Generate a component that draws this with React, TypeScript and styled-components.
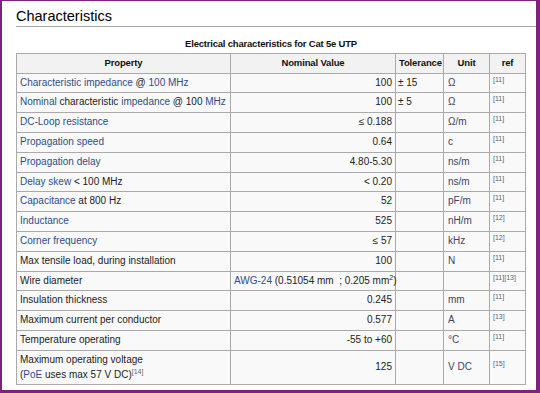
import React, { FC } from "react";
import styled, { createGlobalStyle } from "styled-components";

const GlobalStyle = createGlobalStyle`
  html, body {
    margin: 0;
    padding: 0;
    background: #ffffff;
  }
  body {
    font-family: "Liberation Sans", Arial, sans-serif;
  }
`;

const Frame = styled.div`
  box-sizing: border-box;
  width: 540px;
  height: 393px;
  border-style: solid;
  border-color: #7d237d;
  border-width: 1px 4px 3px 2px;
  padding: 0 0 0 14px;
  overflow: hidden;
  background: #ffffff;
`;

const Heading = styled.h2`
  margin: 0;
  padding: 6px 0 0 0;
  height: 19px;
  font-family: "Liberation Sans", Arial, sans-serif;
  font-size: 14.5px;
  font-weight: normal;
  line-height: 19px;
  color: #000000;
  border-bottom: 1px solid #aaaaaa;
`;

const Table = styled.table`
  margin-top: 10px;
  width: 509px;
  border-collapse: collapse;
  table-layout: fixed;
  background: #f9f9f9;
  border: 1px solid #aaaaaa;
  font-size: 10px;
  color: #222222;
`;

const Caption = styled.caption`
  font-weight: bold;
  font-size: 9.5px;
  letter-spacing: -0.2px;
  line-height: 13px;
  padding-bottom: 3px;
  color: #111111;
  background: #ffffff;
`;

const HeadCell = styled.th<{ $width: number }>`
  box-sizing: border-box;
  width: ${(p) => p.$width}px;
  background: #f2f2f2;
  border: 1px solid #aaaaaa;
  padding: 2px 3px;
  line-height: 14.6px;
  font-size: 9.5px;
  letter-spacing: -0.15px;
  font-weight: bold;
  text-align: center;
  color: #111111;
  white-space: nowrap;
`;

const Cell = styled.td<{ $align?: "left" | "right"; $tight?: boolean }>`
  border: 1px solid #aaaaaa;
  padding: ${(p) => (p.$tight ? "2px 2px" : "2px 3px")};
  line-height: 14.8px;
  text-align: ${(p) => p.$align || "left"};
  vertical-align: middle;
  white-space: nowrap;
  overflow: visible;

  sup {
    font-size: 7px;
    line-height: 0;
  }
`;

const UnitCell = styled(Cell)`
  padding-left: 4px;
  color: #3b4566;
`;

const RefCell = styled.td`
  border: 1px solid #aaaaaa;
  padding: 2px 3px;
  line-height: 14.8px;
  vertical-align: middle;
  white-space: nowrap;
`;

const Link = styled.span`
  color: #2d4d8c;
`;

const Ref = styled.sup`
  font-size: 7px;
  line-height: 0;
  color: #5a5f80;
  vertical-align: super;
`;

type Row = {
  property: React.ReactNode;
  value: React.ReactNode;
  valueLeft?: boolean;
  tolerance?: string;
  unit?: string;
  refs: string[];
};

const rows: Row[] = [
  {
    property: (
      <>
        <Link>Characteristic</Link> <Link>impedance</Link> @ <Link>100 MHz</Link>
      </>
    ),
    value: "100",
    tolerance: "± 15",
    unit: "Ω",
    refs: ["11"],
  },
  {
    property: (
      <>
        <Link>Nominal</Link> characteristic <Link>impedance</Link> @ 100{" "}
        <Link>MHz</Link>
      </>
    ),
    value: "100",
    tolerance: "± 5",
    unit: "Ω",
    refs: ["11"],
  },
  {
    property: <Link>DC-Loop resistance</Link>,
    value: "≤ 0.188",
    unit: "Ω/m",
    refs: ["11"],
  },
  { property: <Link>Propagation speed</Link>, value: "0.64", unit: "c", refs: ["11"] },
  { property: <Link>Propagation delay</Link>, value: "4.80-5.30", unit: "ns/m", refs: ["11"] },
  {
    property: (
      <>
        <Link>Delay skew</Link> &lt; 100 MHz
      </>
    ),
    value: "< 0.20",
    unit: "ns/m",
    refs: ["11"],
  },
  {
    property: (
      <>
        <Link>Capacitance</Link> at 800 Hz
      </>
    ),
    value: "52",
    unit: "pF/m",
    refs: ["11"],
  },
  { property: <Link>Inductance</Link>, value: "525", unit: "nH/m", refs: ["12"] },
  { property: <Link>Corner frequency</Link>, value: "≤ 57", unit: "kHz", refs: ["12"] },
  { property: "Max tensile load, during installation", value: "100", unit: "N", refs: ["11"] },
  {
    property: "Wire diameter",
    value: (
      <>
        <Link>AWG-24</Link> (0.51054 mm&nbsp; ; 0.205 mm<sup>2</sup>)
      </>
    ),
    valueLeft: true,
    refs: ["11", "13"],
  },
  { property: "Insulation thickness", value: "0.245", unit: "mm", refs: ["11"] },
  { property: "Maximum current per conductor", value: "0.577", unit: "A", refs: ["13"] },
  { property: "Temperature operating", value: "-55 to +60", unit: "°C", refs: ["11"] },
  {
    property: (
      <>
        Maximum operating voltage
        <br />(<Link>PoE</Link> uses max 57 V DC)<Ref>[14]</Ref>
      </>
    ),
    value: "125",
    unit: "V DC",
    refs: ["15"],
  },
];

const App: FC = () => {
  return (
    <>
      <GlobalStyle />
      <Frame>
        <Heading>Characteristics</Heading>
        <Table>
          <Caption>Electrical characteristics for Cat 5e UTP</Caption>
          <thead>
            <tr>
              <HeadCell $width={214}>Property</HeadCell>
              <HeadCell $width={165}>Nominal Value</HeadCell>
              <HeadCell $width={48}>Tolerance</HeadCell>
              <HeadCell $width={46}>Unit</HeadCell>
              <HeadCell $width={36}>ref</HeadCell>
            </tr>
          </thead>
          <tbody>
            {rows.map((row, i) => (
              <tr key={i}>
                <Cell>{row.property}</Cell>
                <Cell $align={row.valueLeft ? "left" : "right"}>{row.value}</Cell>
                <Cell $tight>{row.tolerance}</Cell>
                <UnitCell>{row.unit}</UnitCell>
                <RefCell>
                  {row.refs.map((r) => (
                    <Ref key={r}>[{r}]</Ref>
                  ))}
                </RefCell>
              </tr>
            ))}
          </tbody>
        </Table>
      </Frame>
    </>
  );
};

export default App;
